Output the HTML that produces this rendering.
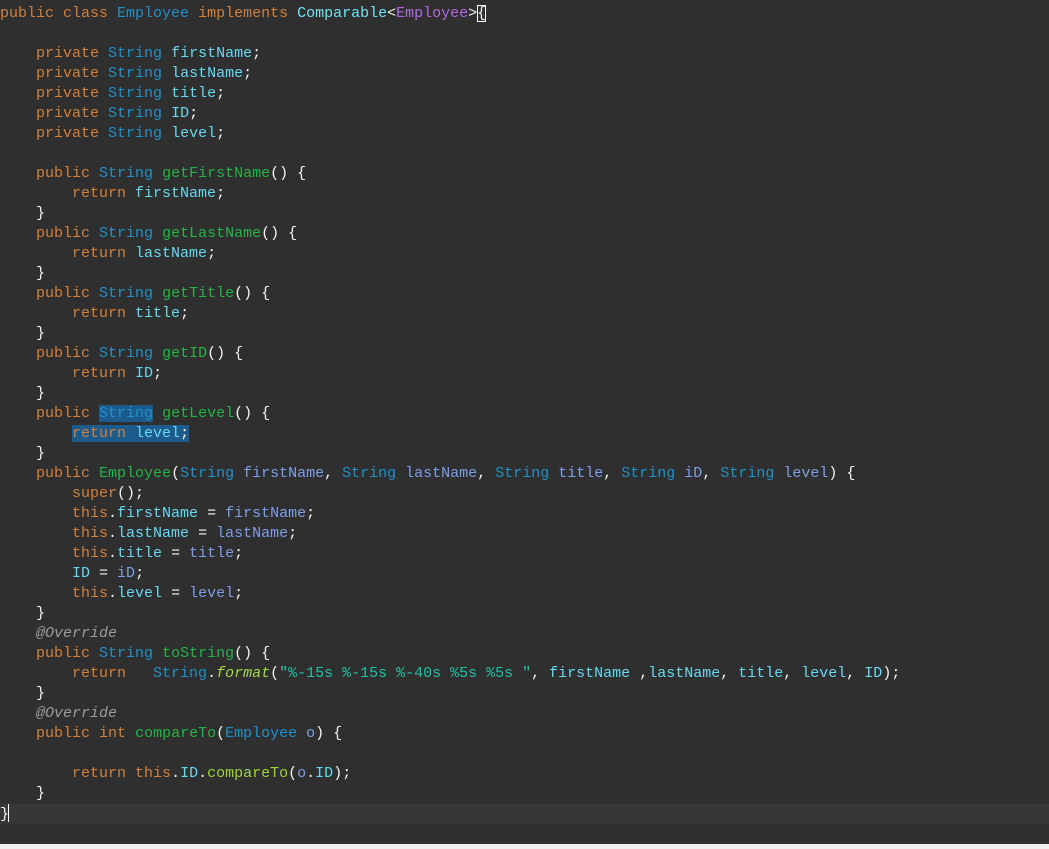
<!DOCTYPE html>
<html><head><meta charset="utf-8"><style>
html,body{margin:0;padding:0;width:1049px;height:849px;overflow:hidden;background:#2f2f2f;}
#ed{position:absolute;left:0;top:4px;font-family:"Liberation Mono",monospace;font-size:15px;line-height:20px;color:#f4f4ee;}
.l{height:20px;white-space:pre;}
.k{color:#d2803a}.t{color:#1f91c9}.f{color:#66d9f0}.p{color:#7d9fe8}.m{color:#23b447}.a{color:#9a9a9a;font-style:italic}
.s{color:#1fc3a3}.i{color:#a5d84a;font-style:italic}.c{color:#9dd733}.ty{color:#b368e0}.ci{color:#6fe3f0}
.sel{background:#1c5b8c}
#cur{position:absolute;left:0;top:804px;width:1049px;height:20px;background:#373737;}
#bot{position:absolute;left:0;top:844px;width:1049px;height:5px;background:#f0f0f0;}
.box{outline:1px solid #fff;outline-offset:-1px}
.caret{display:inline-block;width:1px;height:18px;background:#fff;vertical-align:-4px;margin-left:-1px}
</style></head><body>
<div id="cur"></div><div id="bot"></div>
<div id="ed"><div class="l"><span class="k">public class</span> <span class="t">Employee</span> <span class="k">implements</span> <span class="ci">Comparable</span>&lt;<span class="ty">Employee</span>&gt;<span class="box">{</span></div><div class="l"></div><div class="l">    <span class="k">private</span> <span class="t">String</span> <span class="f">firstName</span>;</div><div class="l">    <span class="k">private</span> <span class="t">String</span> <span class="f">lastName</span>;</div><div class="l">    <span class="k">private</span> <span class="t">String</span> <span class="f">title</span>;</div><div class="l">    <span class="k">private</span> <span class="t">String</span> <span class="f">ID</span>;</div><div class="l">    <span class="k">private</span> <span class="t">String</span> <span class="f">level</span>;</div><div class="l"></div><div class="l">    <span class="k">public</span> <span class="t">String</span> <span class="m">getFirstName</span>() {</div><div class="l">        <span class="k">return</span> <span class="f">firstName</span>;</div><div class="l">    }</div><div class="l">    <span class="k">public</span> <span class="t">String</span> <span class="m">getLastName</span>() {</div><div class="l">        <span class="k">return</span> <span class="f">lastName</span>;</div><div class="l">    }</div><div class="l">    <span class="k">public</span> <span class="t">String</span> <span class="m">getTitle</span>() {</div><div class="l">        <span class="k">return</span> <span class="f">title</span>;</div><div class="l">    }</div><div class="l">    <span class="k">public</span> <span class="t">String</span> <span class="m">getID</span>() {</div><div class="l">        <span class="k">return</span> <span class="f">ID</span>;</div><div class="l">    }</div><div class="l">    <span class="k">public</span> <span class="t sel">String</span> <span class="m">getLevel</span>() {</div><div class="l">        <span class="sel"><span class="k">return</span> <span class="f">level</span>;</span></div><div class="l">    }</div><div class="l">    <span class="k">public</span> <span class="m">Employee</span>(<span class="t">String</span> <span class="p">firstName</span>, <span class="t">String</span> <span class="p">lastName</span>, <span class="t">String</span> <span class="p">title</span>, <span class="t">String</span> <span class="p">iD</span>, <span class="t">String</span> <span class="p">level</span>) {</div><div class="l">        <span class="k">super</span>();</div><div class="l">        <span class="k">this</span>.<span class="f">firstName</span> = <span class="p">firstName</span>;</div><div class="l">        <span class="k">this</span>.<span class="f">lastName</span> = <span class="p">lastName</span>;</div><div class="l">        <span class="k">this</span>.<span class="f">title</span> = <span class="p">title</span>;</div><div class="l">        <span class="f">ID</span> = <span class="p">iD</span>;</div><div class="l">        <span class="k">this</span>.<span class="f">level</span> = <span class="p">level</span>;</div><div class="l">    }</div><div class="l">    <span class="a">@Override</span></div><div class="l">    <span class="k">public</span> <span class="t">String</span> <span class="m">toString</span>() {</div><div class="l">        <span class="k">return</span>   <span class="t">String</span>.<span class="i">format</span>(<span class="s">"%-15s %-15s %-40s %5s %5s "</span>, <span class="f">firstName</span> ,<span class="f">lastName</span>, <span class="f">title</span>, <span class="f">level</span>, <span class="f">ID</span>);</div><div class="l">    }</div><div class="l">    <span class="a">@Override</span></div><div class="l">    <span class="k">public</span> <span class="k">int</span> <span class="m">compareTo</span>(<span class="t">Employee</span> <span class="p">o</span>) {</div><div class="l"></div><div class="l">        <span class="k">return</span> <span class="k">this</span>.<span class="f">ID</span>.<span class="c">compareTo</span>(<span class="p">o</span>.<span class="f">ID</span>);</div><div class="l">    }</div><div class="l">}<span class="caret"></span></div></div>
</body></html>
